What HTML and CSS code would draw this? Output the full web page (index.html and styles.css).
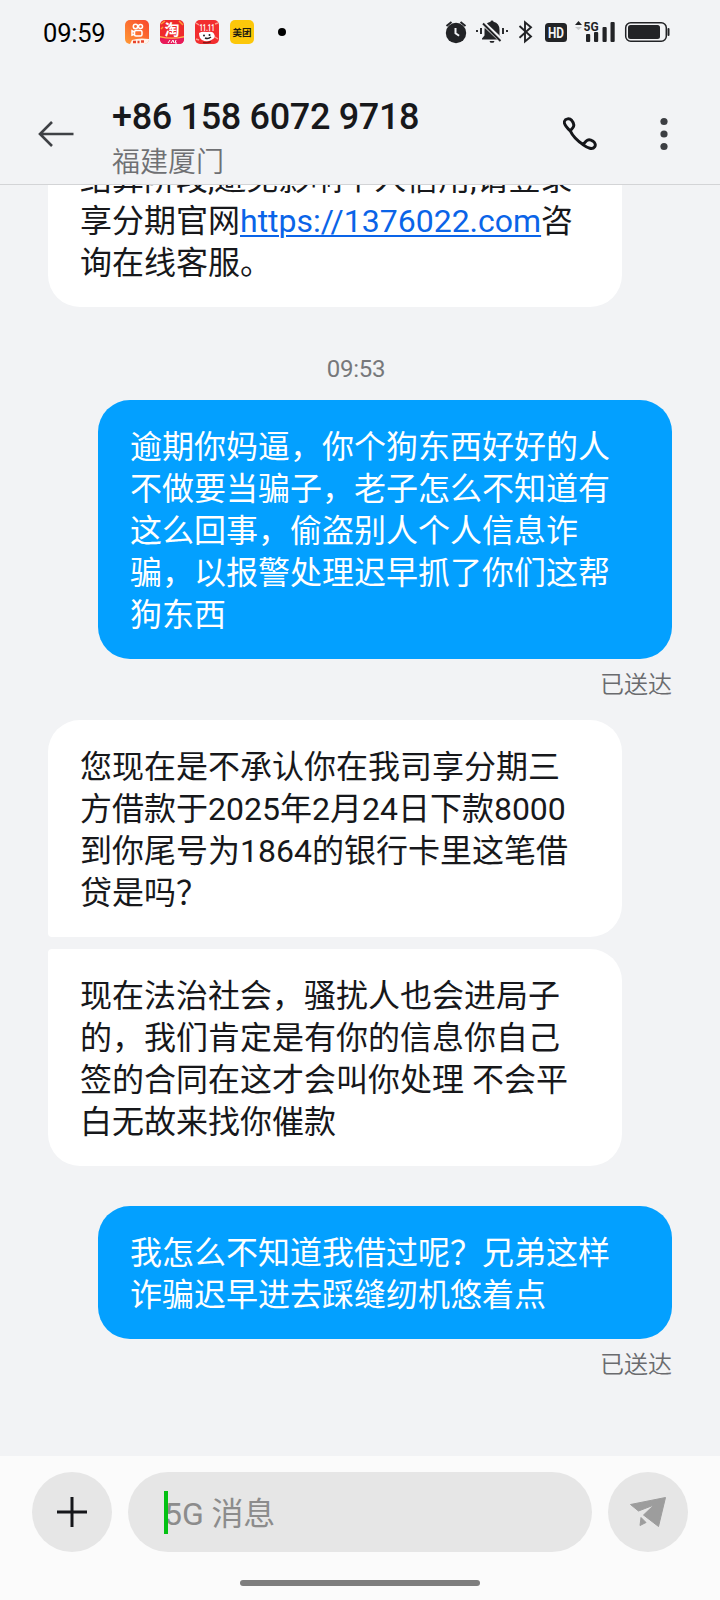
FILE: index.html
```html
<!DOCTYPE html>
<html lang="zh-CN">
<head>
<meta charset="utf-8">
<title>+86 158 6072 9718</title>
<link rel="stylesheet" href="styles.css">
</head>
<body>
<div class="phone">
  <div class="statusbar">
    <span class="clock">09:59</span>
    <div class="apps">
      <svg width="24" height="24" viewBox="0 0 24 24">
        <defs><linearGradient id="ks" x1="1" y1="0" x2="0" y2="1"><stop offset="0" stop-color="#f8452c"/><stop offset="1" stop-color="#ff9a35"/></linearGradient></defs>
        <rect width="24" height="24" rx="5" fill="url(#ks)"/>
        <path d="M5 24L7 20Q14 17.500 24 19V20Q23 24 19 24Z" fill="#fff3ea"/>
        <path d="M8 22h3M12.500 22h2M16 21.500h3" stroke="#e8432c" stroke-width="2.400"/>
        <g fill="none" stroke="#fff" stroke-width="1.500"><circle cx="10.500" cy="6.500" r="2.200"/><circle cx="15.500" cy="6.500" r="2"/><rect x="9.500" y="10.500" width="7.500" height="5.500" rx="1.500"/><path d="M9.500 12L7 10.800v4.400l2.500-1"/></g>
      </svg>
      <svg width="24" height="24" viewBox="0 0 24 24">
        <rect width="24" height="24" rx="5" fill="#ee2a2c"/>
        <path d="M1 4l4-3M19 1l4 4M1 9l2-2" stroke="#ff9a35" stroke-width="1.500"/>
        <path d="M0 16.500Q12 19 24 16.500V19Q24 24 19 24H5Q0 24 0 19Z" fill="#e8195a"/>
        <path d="M0 16Q12 19 24 16v1.500Q12 20 0 17.500Z" fill="#ffb24a"/>
        <text x="12" y="15" class="tao">淘</text>
        <path d="M8 23l2-3M11 23l2-3 1 3M16 20l-1 3h2" stroke="#fff" stroke-width="1" fill="none"/>
      </svg>
      <svg width="24" height="24" viewBox="0 0 24 24">
        <rect width="24" height="24" rx="5" fill="#f22d2f"/>
        <path d="M1 3l3 2M1 19l3 1M20 4l3-1M20 17l3 2" stroke="#ff9b8c" stroke-width="1.500"/>
        <text x="12" y="11" class="sale" textLength="15" lengthAdjust="spacingAndGlyphs">11.11</text>
        <path d="M4 13q3-2 8-1 6-1 7 2 2 3-1 5-5 4-11 1-3-2-3-7z" fill="#fff"/>
        <circle cx="9" cy="15.500" r="1" fill="#222"/><circle cx="14.500" cy="15" r="1" fill="#222"/>
        <path d="M10 18q3 1.500 6-1" stroke="#222" stroke-width="1.500" fill="none"/>
        <path d="M8 22.500q4 1 8-1" stroke="#8b1718" stroke-width="1.500" fill="none"/>
      </svg>
      <svg width="24" height="24" viewBox="0 0 24 24">
        <rect width="24" height="24" rx="5" fill="#fcc70a"/>
        <text x="12" y="15.700" class="meituan">美团</text>
      </svg>
    </div>
    <span class="dot"></span>
    <svg class="sys" width="230" height="26" viewBox="444 19 230 26">
      <g fill="#222326">
        <circle cx="456" cy="33" r="10.200"/>
        <path d="M446.500 26l5-4M460.500 22l5 4" stroke="#222326" stroke-width="2"/>
        <path d="M455.500 28v5.200l3.600 2.600" fill="none" stroke="#f2f3f5" stroke-width="2"/>
        <path d="M482 38.500l2.500-3V30q0-7 6-8.200 0-1.300 1.500-1.300t1.500 1.300q6 1.200 6 8.200v5.500l2.500 3v1H482z"/>
        <path d="M489.500 41h5l-1 1.800h-3z"/>
        <path d="M482.500 22.500l20 19" stroke="#f2f3f5" stroke-width="4.500"/>
        <path d="M483 23.500l17.500 17.500" stroke="#222326" stroke-width="1.900"/>
        <path d="M481 28v6M503 28v6M477 30v2M507 30v2" stroke="#222326" stroke-width="1.900"/>
        <path d="M519.500 26l11.500 10.500-6 5V22.200l6 5-11.500 10.600" fill="none" stroke="#222326" stroke-width="1.900"/>
        <rect x="545" y="23" width="22" height="19" rx="3.500"/>
        <text x="556" y="37.800" class="hd" textLength="16" lengthAdjust="spacingAndGlyphs">HD</text>
        <path d="M575 25l3.500-4 3.500 4z"/>
        <path d="M575 27h7l-3.500 3z" fill="#c8c9cb"/>
        <text x="583.500" y="31" class="net">5G</text>
        <rect x="586" y="34" width="4.200" height="8" rx="1"/>
        <rect x="594" y="32" width="4.200" height="10" rx="1"/>
        <rect x="602.500" y="27" width="4.200" height="15" rx="1"/>
        <rect x="610.500" y="22" width="4.200" height="20" rx="1"/>
        <rect x="625.700" y="22.700" width="40.600" height="18.600" rx="5" fill="none" stroke="#222326" stroke-width="1.500"/>
        <rect x="628" y="25" width="32" height="14" rx="2.500"/>
        <rect x="667.500" y="28" width="2" height="8" rx="1"/>
      </g>
    </svg>
  </div>

  <header class="header">
    <svg class="back" width="36" height="28" viewBox="0 0 36 28"><path d="M14 2L2 14l12 12M2 14h33.500" fill="none" stroke="#3f4145" stroke-width="2.600"/></svg>
    <div class="contact">
      <div class="number">+86 158 6072 9718</div>
      <div class="place">福建厦门</div>
    </div>
    <svg class="call" width="34" height="34" viewBox="0.500 0 36 36"><path d="M8.200 14.800C3.600 10.500 1 7.600 2 4.600 3 1.600 7.500 1 9.600 3.500c2.200 2.600 3.300 5.600 1.200 8L8.200 14.600C10.500 19.500 15.500 25 22 29.300M21.500 29.300l3.600-3.900c2-2 4.700-1.500 7.200.2 2.500 1.800 3 4.200 1.700 6-2.200 3.300-7.300 1.500-12.500-2.300z" fill="none" stroke="#15161a" stroke-width="3.100" stroke-linejoin="round"/></svg>
    <svg class="more" width="8" height="34" viewBox="0 0 8 34"><g fill="#3c3e42"><circle cx="4" cy="4.500" r="3.600"/><circle cx="4" cy="17" r="3.600"/><circle cx="4" cy="29.500" r="3.600"/></g></svg>
  </header>

  <main class="chat">
    <div class="bubble in">结算阶段,避免影响个人信用,请登录享分期官网<a class="link">https://1376022.com</a>咨询在线客服。</div>
    <div class="time">09:53</div>
    <div class="bubble out">逾期你妈逼，你个狗东西好好的人不做要当骗子，老子怎么不知道有这么回事，偷盗别人个人信息诈骗，以报警处理迟早抓了你们这帮狗东西</div>
    <div class="sent">已送达</div>
    <div class="bubble in first">您现在是不承认你在我司享分期三方借款于2025年2月24日下款8000到你尾号为1864的银行卡里这笔借贷是吗？</div>
    <div class="bubble in last">现在法治社会，骚扰人也会进局子的，我们肯定是有你的信息你自己签的合同在这才会叫你处理 不会平白无故来找你催款</div>
    <div class="bubble out reply">我怎么不知道我借过呢？兄弟这样诈骗迟早进去踩缝纫机悠着点</div>
    <div class="sent">已送达</div>
  </main>

  <footer class="composer">
    <div class="row">
      <div class="round"><svg width="30" height="30" viewBox="0 0 30 30"><path d="M15 0v30M0 15h30" stroke="#15161a" stroke-width="3"/></svg></div>
      <div class="field"><span class="caret"></span><span class="hint">5G 消息</span></div>
      <div class="round"><svg class="plane" width="38" height="32" viewBox="0 0 38 32"><g fill="#9d9d9d" stroke="#9d9d9d" stroke-linejoin="round"><path d="M1.500 8.500L36.500 1.500 29.500 30.500 14.500 19 25 9 9.500 15z"/><path d="M12 21.500L17 26.500 11 29.500z"/></g></svg></div>
    </div>
    <div class="handle"></div>
  </footer>
</div>
</body>
</html>
```
FILE: styles.css
```css
* { box-sizing: border-box; }
body {
  margin: 0;
  background: #f2f3f5;
  font-family: Roboto, "Noto Sans CJK SC", sans-serif;
  color: #17181b;
}
.phone {
  width: 720px;
  height: 1600px;
  display: flex;
  flex-direction: column;
  overflow: hidden;
}

/* status bar */
.statusbar {
  height: 64px;
  flex: none;
  display: flex;
  align-items: center;
  padding: 0 46px 0 43px;
}
.clock { width: 82px; font-size: 25.500px; line-height: 30px; padding-top: 1px; letter-spacing: -0.200px; font-weight: 400; color: #000; }
.apps { display: flex; gap: 11px; }
.apps svg { display: block; }
.dot { width: 8px; height: 8px; border-radius: 50%; background: #000; margin-left: 24px; }
.sys { margin-left: auto; }
.tao { font-size: 15px; font-weight: 700; fill: #fff; text-anchor: middle; }
.sale { font-size: 9px; font-weight: 700; fill: #fff; text-anchor: middle; }
.meituan { font-size: 9.500px; font-weight: 700; fill: #1c1a10; text-anchor: middle; }
.hd { font-size: 14.500px; font-weight: 700; fill: #f2f3f5; text-anchor: middle; }
.net { font-size: 12px; font-weight: 700; }

/* contact header */
.header {
  height: 121px;
  flex: none;
  display: flex;
  align-items: flex-start;
  padding: 32px 52px 0 38px;
  border-bottom: 1px solid #d3d4d6;
}
.back { margin-top: 24px; }
.contact { margin-left: 38px; flex: 1; }
.number { font-size: 36px; line-height: 42px; font-weight: 500; letter-spacing: -0.330px; }
.place { font-size: 28px; line-height: 36px; margin-top: 7px; color: #6f7073; font-weight: 350; }
.call { margin: 21px 63px 0 0; }
.more { margin-top: 21px; }

/* conversation */
.chat {
  flex: 1;
  min-height: 0;
  overflow: hidden;
  display: flex;
  flex-direction: column;
  justify-content: flex-end;
  padding: 0 48px 75px;
}
.bubble {
  flex: none;
  width: 574px;
  padding: 26px 31px 23px 32px;
  border-radius: 32px;
  font-size: 32px;
  line-height: 42px;
  font-weight: 380;
}
.in { background: #fff; align-self: flex-start; }
.out { background: #03a0ff; color: #fff; align-self: flex-end; }
.first { border-bottom-left-radius: 4px; margin-top: 19px; }
.last { border-top-left-radius: 4px; margin-top: 12px; }
.reply { margin-top: 40px; }
.link { color: #0a64e8; text-decoration: underline; text-decoration-thickness: 2px; text-underline-offset: 3px; }
.time {
  flex: none;
  margin: 46px 8px 16px 0;
  padding-top: 1px;
  font-size: 24px;
  line-height: 30px;
  letter-spacing: -0.300px;
  text-align: center;
  color: #77787b;
}
.sent {
  flex: none;
  align-self: flex-end;
  margin-top: 10px;
  height: 32px;
  font-size: 24px;
  line-height: 32px;
  color: #6a6b6e;
  font-weight: 350;
}

/* composer */
.composer { height: 144px; flex: none; background: #fbfbfb; padding: 16px 32px 0; }
.row { display: flex; gap: 16px; }
.round {
  width: 80px;
  height: 80px;
  border-radius: 50%;
  background: #e6e6e6;
  display: flex;
  align-items: center;
  justify-content: center;
}
.plane { margin-left: -1px; }
.field {
  flex: 1;
  height: 80px;
  border-radius: 40px;
  background: #e6e6e6;
  display: flex;
  align-items: center;
  padding-left: 36px;
}
.caret { width: 4px; height: 43px; background: #04c113; margin-right: -4px; position: relative; z-index: 1; }
.hint { font-size: 32px; line-height: 42px; padding-top: 4px; color: #8c8c8c; font-weight: 380; letter-spacing: -0.100px; }
.handle { width: 240px; height: 6px; border-radius: 3px; background: #7e7e7e; margin: 28px auto 0; }
```
